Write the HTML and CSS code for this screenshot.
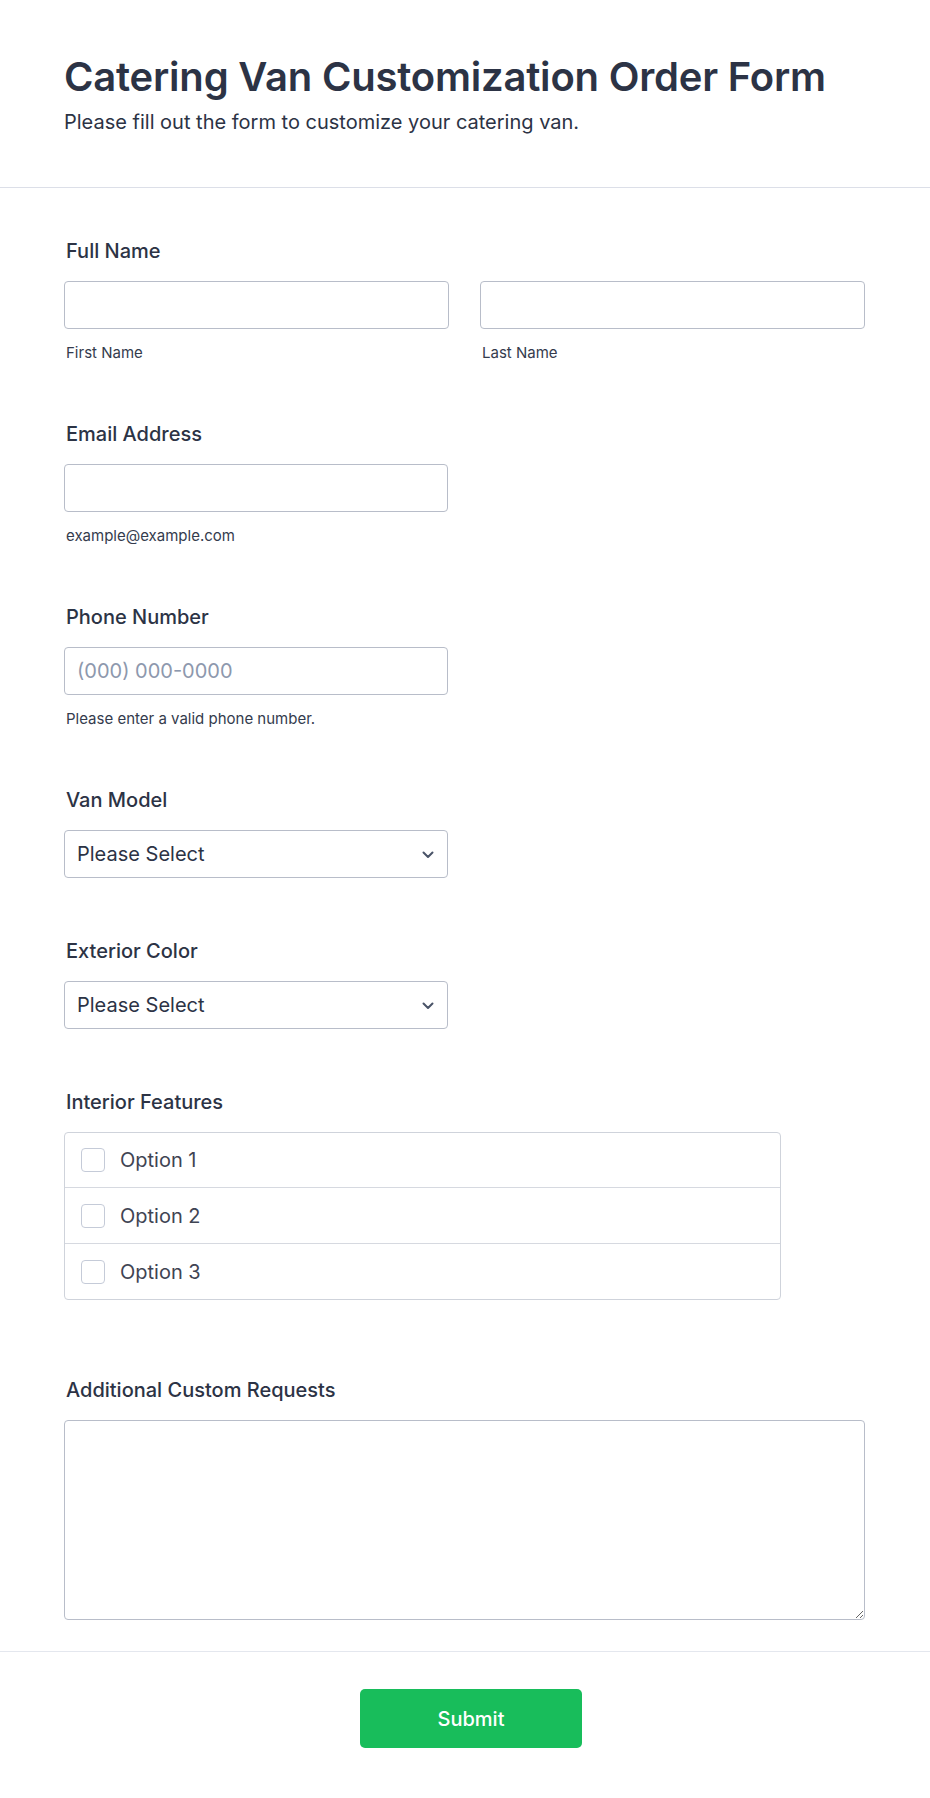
FILE: index.html
```html
<!DOCTYPE html>
<html lang="en">
<head>
<meta charset="utf-8">
<title>Catering Van Customization Order Form</title>
<link rel="stylesheet" href="styles.css">
</head>
<body>
<header class="form-header">
  <h1 class="form-title">Catering Van Customization Order Form</h1>
  <p class="form-subtitle">Please fill out the form to customize your catering van.</p>
</header>

<form class="form-body">
  <div class="field">
    <label class="field-label">Full Name</label>
    <div class="name-grid">
      <div class="name-col">
        <input class="text-input" type="text">
        <span class="sublabel">First Name</span>
      </div>
      <div class="name-col">
        <input class="text-input" type="text">
        <span class="sublabel">Last Name</span>
      </div>
    </div>
  </div>

  <div class="field">
    <label class="field-label">Email Address</label>
    <input class="text-input half" type="email">
    <span class="sublabel">example@example.com</span>
  </div>

  <div class="field">
    <label class="field-label">Phone Number</label>
    <input class="text-input half" type="tel" placeholder="(000) 000-0000">
    <span class="sublabel">Please enter a valid phone number.</span>
  </div>

  <div class="field">
    <label class="field-label">Van Model</label>
    <div class="select-wrap half">
      <select class="select-input"><option>Please Select</option></select>
      <svg class="chevron" width="12" height="8" viewBox="0 0 12 8"><path d="M1.5 1.5 L6 6 L10.5 1.5" fill="none" stroke="#4a5468" stroke-width="2" stroke-linecap="round" stroke-linejoin="round"/></svg>
    </div>
  </div>

  <div class="field">
    <label class="field-label">Exterior Color</label>
    <div class="select-wrap half">
      <select class="select-input"><option>Please Select</option></select>
      <svg class="chevron" width="12" height="8" viewBox="0 0 12 8"><path d="M1.5 1.5 L6 6 L10.5 1.5" fill="none" stroke="#4a5468" stroke-width="2" stroke-linecap="round" stroke-linejoin="round"/></svg>
    </div>
  </div>

  <div class="field field-checks">
    <label class="field-label">Interior Features</label>
    <div class="check-group">
      <label class="check-row"><span class="check-box"></span><span class="check-text">Option 1</span></label>
      <label class="check-row"><span class="check-box"></span><span class="check-text">Option 2</span></label>
      <label class="check-row"><span class="check-box"></span><span class="check-text">Option 3</span></label>
    </div>
  </div>

  <div class="field">
    <label class="field-label">Additional Custom Requests</label>
    <textarea class="textarea-input"></textarea>
  </div>
</form>

<footer class="form-footer">
  <button class="submit-btn" type="button">Submit</button>
</footer>
</body>
</html>
```

FILE: styles.css
```css
* {
  box-sizing: border-box;
}

html, body {
  margin: 0;
  padding: 0;
  background: #ffffff;
}

body {
  font-family: Inter, "Noto Sans", "Liberation Sans", sans-serif;
  color: #2c3345;
}

.form-header {
  padding: 53px 65px 53px 64px;
  border-bottom: 1px solid #dcdfe8;
}

.form-title {
  margin: 0;
  font-size: 40px;
  line-height: 48px;
  font-weight: 600;
  color: #2c3345;
  letter-spacing: -0.2px;
}

.form-subtitle {
  margin: 9px 0 0;
  font-size: 20px;
  line-height: 24px;
  font-weight: 400;
  color: #2c3345;
}

.form-body {
  display: flex;
  flex-direction: column;
  gap: 60px;
  padding: 51px 65px 31px 64px;
}

.field {
  display: flex;
  flex-direction: column;
  align-items: flex-start;
}

.field-checks {
  margin-bottom: 18px;
}

.field-label {
  font-size: 20px;
  line-height: 24px;
  font-weight: 500;
  color: #2c3345;
  margin-bottom: 18px;
  padding-left: 2px;
}

.name-grid {
  display: grid;
  grid-template-columns: 1fr 1fr;
  column-gap: 31px;
  width: 100%;
}

.name-col {
  display: flex;
  flex-direction: column;
}

.text-input,
.select-input,
.textarea-input {
  font-family: Inter, "Noto Sans", "Liberation Sans", sans-serif;
  font-size: 20px;
  color: #2c3345;
  border: 1px solid #b8bdc9;
  border-radius: 4px;
  background: #ffffff;
  outline: none;
}

.text-input {
  height: 48px;
  width: 100%;
  padding: 0 12px;
}

.text-input::placeholder {
  color: #8d98ad;
}

.half {
  width: 384px;
}

.sublabel {
  margin-top: 15px;
  padding-left: 2px;
  font-size: 15px;
  line-height: 18px;
  color: #343b4d;
}

.select-wrap {
  position: relative;
  margin-bottom: 1px;
}

.select-input {
  -webkit-appearance: none;
  appearance: none;
  width: 100%;
  height: 48px;
  padding: 0 40px 0 12px;
}

.chevron {
  position: absolute;
  right: 14px;
  top: 21px;
  pointer-events: none;
}

.check-group {
  width: 717px;
  border: 1px solid #cfd3db;
  border-radius: 4px;
  display: flex;
  flex-direction: column;
}

.check-row {
  display: flex;
  align-items: center;
  gap: 15px;
  height: 56px;
  padding-left: 16px;
  border-bottom: 1px solid #d6d9e0;
}

.check-row:first-child {
  height: 55px;
}

.check-row:last-child {
  height: 55px;
  border-bottom: none;
}

.check-box {
  width: 24px;
  height: 24px;
  border: 1px solid #c5cbd8;
  border-radius: 4px;
  background: #ffffff;
  flex: none;
}

.check-text {
  font-size: 20px;
  line-height: 24px;
  color: #3f4453;
}

.textarea-input {
  width: 100%;
  height: 200px;
  padding: 10px 12px;
  resize: vertical;
  display: block;
}

.form-footer {
  border-top: 1px solid #e4e7ee;
  display: flex;
  justify-content: center;
  padding: 37px 0 50px 12px;
}

.submit-btn {
  width: 222px;
  height: 59px;
  border: none;
  border-radius: 5px;
  background: #18bd5b;
  color: #ffffff;
  font-family: Inter, "Noto Sans", "Liberation Sans", sans-serif;
  font-size: 20px;
  font-weight: 500;
  cursor: pointer;
}
```
